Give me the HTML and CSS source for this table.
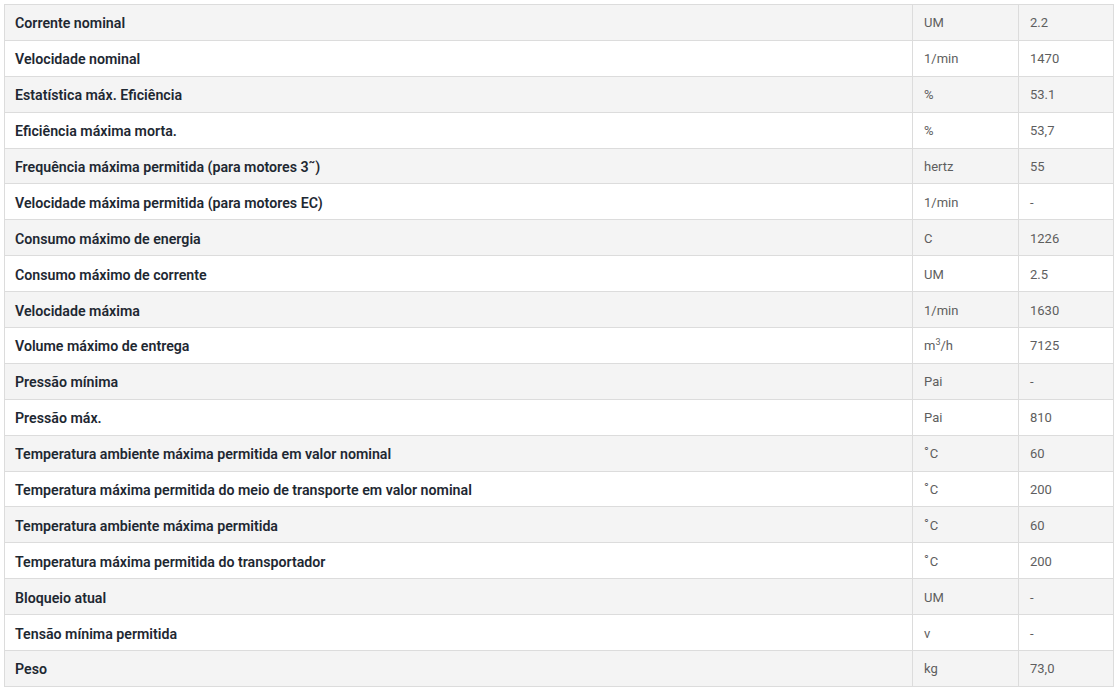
FILE: index.html
```html
<!DOCTYPE html>
<html lang="pt">
<head>
<meta charset="utf-8">
<title>Dados técnicos</title>
<link rel="stylesheet" href="styles.css">
</head>
<body>
<div class="wrap">
<table class="specs">
<colgroup><col class="c-label"><col class="c-unit"><col class="c-val"></colgroup>
<tbody>
<tr><th>Corrente nominal</th><td>UM</td><td>2.2</td></tr>
<tr><th>Velocidade nominal</th><td>1/min</td><td>1470</td></tr>
<tr><th>Estatística máx. Eficiência</th><td>%</td><td>53.1</td></tr>
<tr><th>Eficiência máxima morta.</th><td>%</td><td>53,7</td></tr>
<tr><th>Frequência máxima permitida (para motores 3˜)</th><td>hertz</td><td>55</td></tr>
<tr><th>Velocidade máxima permitida (para motores EC)</th><td>1/min</td><td>-</td></tr>
<tr><th>Consumo máximo de energia</th><td>C</td><td>1226</td></tr>
<tr><th>Consumo máximo de corrente</th><td>UM</td><td>2.5</td></tr>
<tr><th>Velocidade máxima</th><td>1/min</td><td>1630</td></tr>
<tr><th>Volume máximo de entrega</th><td>m<sup>3</sup>/h</td><td>7125</td></tr>
<tr><th>Pressão mínima</th><td>Pai</td><td>-</td></tr>
<tr><th>Pressão máx.</th><td>Pai</td><td>810</td></tr>
<tr><th>Temperatura ambiente máxima permitida em valor nominal</th><td><span class="deg">°</span>C</td><td>60</td></tr>
<tr><th>Temperatura máxima permitida do meio de transporte em valor nominal</th><td><span class="deg">°</span>C</td><td>200</td></tr>
<tr><th>Temperatura ambiente máxima permitida</th><td><span class="deg">°</span>C</td><td>60</td></tr>
<tr><th>Temperatura máxima permitida do transportador</th><td><span class="deg">°</span>C</td><td>200</td></tr>
<tr><th>Bloqueio atual</th><td>UM</td><td>-</td></tr>
<tr><th>Tensão mínima permitida</th><td>v</td><td>-</td></tr>
<tr><th>Peso</th><td>kg</td><td>73,0</td></tr>
</tbody>
</table>
</div>
</body>
</html>
```
FILE: styles.css
```css
html, body {
  margin: 0;
  padding: 0;
  background: #ffffff;
}
.wrap {
  padding: 4px 3px 0 4px;
}
.specs {
  width: 1109px;
  border-collapse: collapse;
  table-layout: fixed;
  font-family: Roboto, "Liberation Sans", sans-serif;
  font-size: 14px;
}
.c-label { width: 908px; }
.c-unit { width: 106px; }
.c-val { width: 95px; }
.specs tr { height: 35.9px; }
.specs tr:nth-child(odd) { background: #f4f4f4; }
.specs tr:nth-child(even) { background: #ffffff; }
.specs th,
.specs td {
  border: 1px solid #dcdcdc;
  padding: 2px 10px 0 10px;
  text-align: left;
  vertical-align: middle;
  line-height: 18px;
}
.specs th {
  font-weight: 600;
  font-size: 14.2px;
  color: #1e2832;
}
.specs td {
  font-weight: 400;
  color: #5e5e5e;
  font-size: 13px;
  padding-left: 11px;
}
.specs sup {
  font-size: 9px;
  line-height: 0;
  vertical-align: 5px;
}
.specs .deg {
  font-size: 13px;
  position: relative;
  top: -2px;
  margin-right: 1px;
}
```
